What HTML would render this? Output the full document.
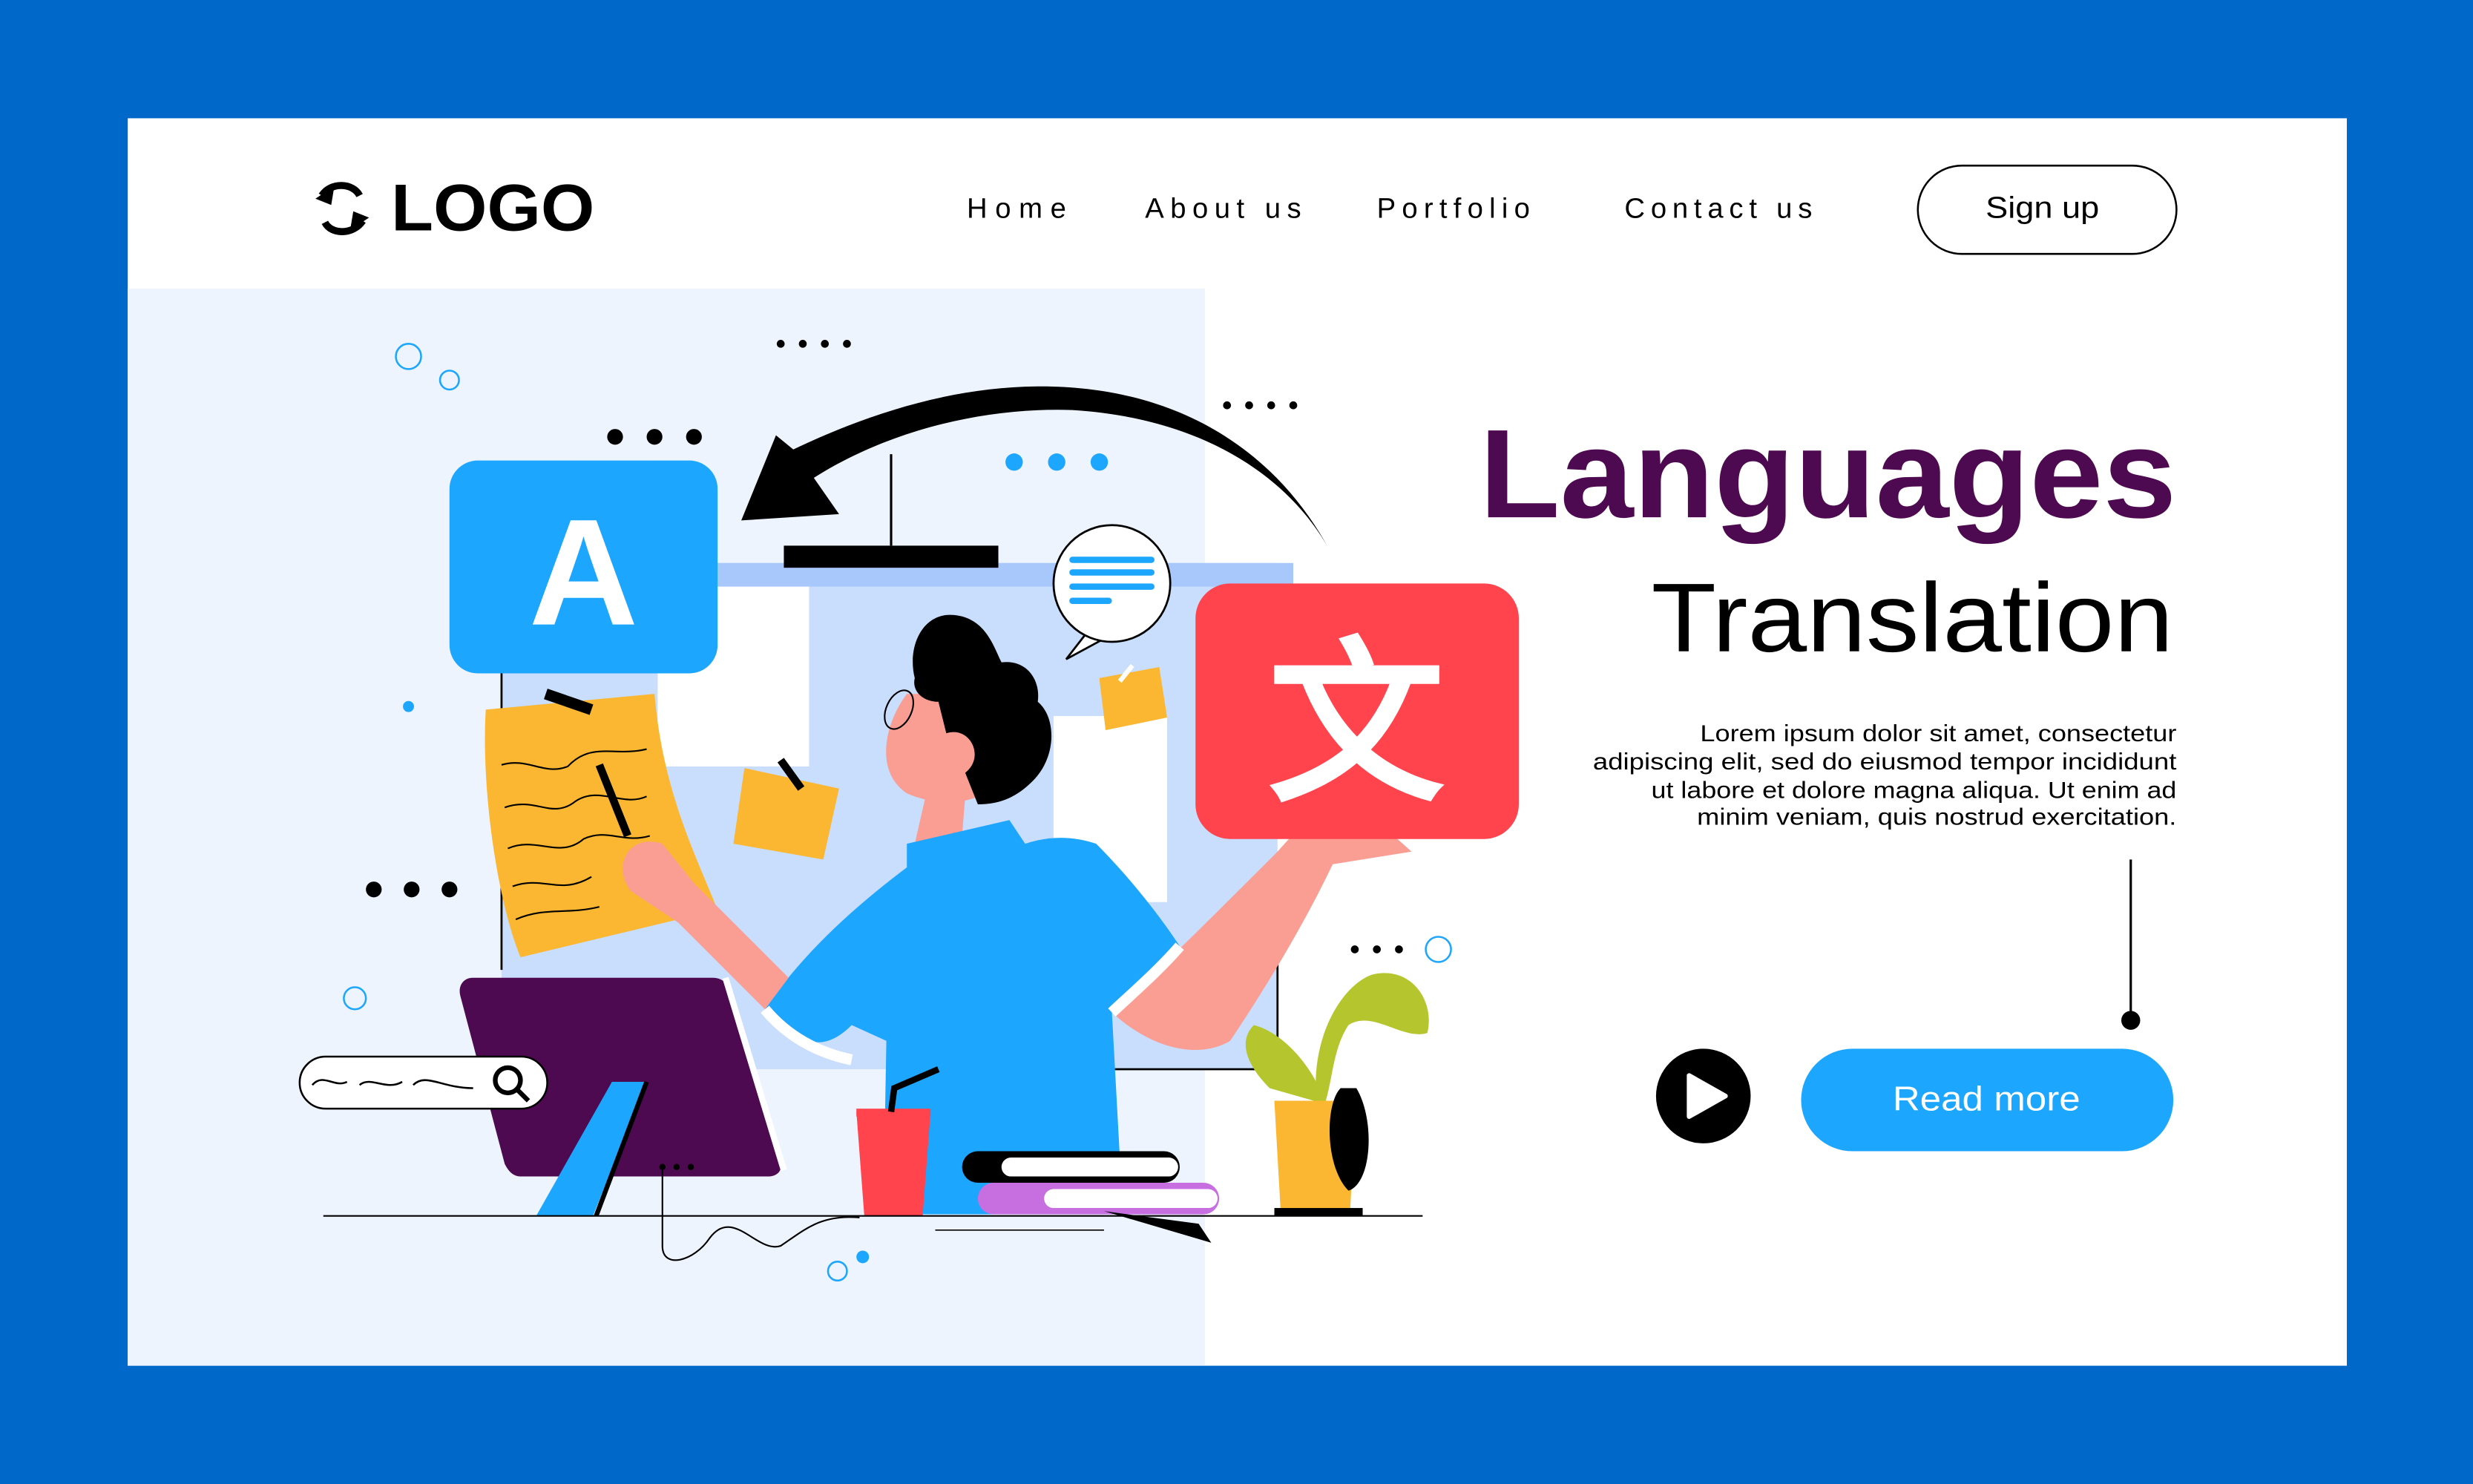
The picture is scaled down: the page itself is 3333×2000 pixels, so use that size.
<!DOCTYPE html>
<html><head><meta charset="utf-8"><style>html,body{margin:0;padding:0;width:3333px;height:2000px;overflow:hidden;background:#0068C9}svg{display:block}text{font-family:"Liberation Sans",sans-serif}</style></head>
<body>
<svg width="3333" height="2000" viewBox="0 0 1568 941" preserveAspectRatio="none" xmlns="http://www.w3.org/2000/svg">
<rect width="1568" height="941" fill="#0068C9"/>
<rect x="81" y="75" width="1407" height="791" fill="#fff"/>
<rect x="81" y="183" width="683" height="683" fill="#EDF4FE"/>
<!-- logo -->
<g fill="none" stroke="#000" stroke-width="4.5">
<path d="M228,124 C224,116 210,115 204,124"/><path d="M206,141 C210,149 224,149 230,140"/></g>
<path d="M200,126 L212,118 L210,130 Z M234,138 L222,146 L224,134 Z" fill="#000"/>
<text x="248" y="146" font-size="42" font-weight="bold" textLength="129" lengthAdjust="spacingAndGlyphs">LOGO</text>
<g font-size="18" fill="#000">
<text x="613" y="138" textLength="63" lengthAdjust="spacing">Home</text><text x="726" y="138" textLength="99" lengthAdjust="spacing">About us</text><text x="873" y="138" textLength="97" lengthAdjust="spacing">Portfolio</text><text x="1030" y="138" textLength="119" lengthAdjust="spacing">Contact us</text></g>
<rect x="1216" y="105" width="164" height="56" rx="28" fill="none" stroke="#000" stroke-width="1.2"/>
<text x="1259" y="138" font-size="19" textLength="72" lengthAdjust="spacingAndGlyphs">Sign up</text>
<text x="938" y="328" font-size="80" font-weight="bold" fill="#4E0A50" textLength="442" lengthAdjust="spacingAndGlyphs">Languages</text>
<text x="1047" y="413" font-size="62" textLength="331" lengthAdjust="spacingAndGlyphs">Translation</text>
<g font-size="14.6">
<text x="1078" y="470" textLength="302" lengthAdjust="spacingAndGlyphs">Lorem ipsum dolor sit amet, consectetur</text>
<text x="1010" y="488" textLength="370" lengthAdjust="spacingAndGlyphs">adipiscing elit, sed do eiusmod tempor incididunt</text>
<text x="1047" y="506" textLength="333" lengthAdjust="spacingAndGlyphs">ut labore et dolore magna aliqua. Ut enim ad</text>
<text x="1076" y="523" textLength="304" lengthAdjust="spacingAndGlyphs">minim veniam, quis nostrud exercitation.</text></g>
<line x1="1351" y1="545" x2="1351" y2="645" stroke="#000" stroke-width="1.5"/>
<circle cx="1351" cy="647" r="6" fill="#000"/>
<circle cx="1080" cy="695" r="30" fill="#000"/>
<path d="M1071,682 L1094,695 L1071,708 Z" fill="#fff" stroke="#fff" stroke-width="3" stroke-linejoin="round"/>
<rect x="1142" y="665" width="236" height="65" rx="32.5" fill="#1DA6FE"/>
<text x="1200" y="704" font-size="22" fill="#fff" textLength="119" lengthAdjust="spacingAndGlyphs">Read more</text>

<!-- illustration -->
<rect x="318" y="357" width="492" height="321" fill="#C9DDFD"/>
<rect x="455" y="357" width="365" height="15" fill="#A8C8FC"/>
<path d="M318,420 V615 M700,678 H810 V570" stroke="#000" fill="none" stroke-width="1.3"/>
<rect x="417" y="372" width="96" height="114" fill="#fff"/>
<rect x="668" y="454" width="72" height="118" fill="#fff"/>
<line x1="565" y1="288" x2="565" y2="346" stroke="#000" stroke-width="1.5"/>
<rect x="497" y="346" width="136" height="14" fill="#000"/>
<path d="M842,347 C805,280 740,245 660,245 C600,245 545,265 503,285 L492,276 L470,330 L532,326 L516,303 C560,275 620,258 680,260 C760,265 815,300 842,347 Z" fill="#000"/>
<!-- A card -->
<rect x="285" y="292" width="170" height="135" rx="18" fill="#1DA6FE"/>
<text x="370" y="396" font-size="96" font-weight="bold" fill="#fff" text-anchor="middle">A</text>
<!-- dots -->
<g fill="#000"><circle cx="390" cy="277" r="5"/><circle cx="415" cy="277" r="5"/><circle cx="440" cy="277" r="5"/>
<circle cx="237" cy="564" r="5"/><circle cx="261" cy="564" r="5"/><circle cx="285" cy="564" r="5"/>
<circle cx="495" cy="218" r="2.5"/><circle cx="509" cy="218" r="2.5"/><circle cx="523" cy="218" r="2.5"/><circle cx="537" cy="218" r="2.5"/>
<circle cx="778" cy="257" r="2.5"/><circle cx="792" cy="257" r="2.5"/><circle cx="806" cy="257" r="2.5"/><circle cx="820" cy="257" r="2.5"/>
<circle cx="859" cy="602" r="2.5"/><circle cx="873" cy="602" r="2.5"/><circle cx="887" cy="602" r="2.5"/></g>
<g fill="#1DA6FE"><circle cx="643" cy="293" r="5.5"/><circle cx="670" cy="293" r="5.5"/><circle cx="697" cy="293" r="5.5"/><circle cx="259" cy="448" r="3.5"/><circle cx="547" cy="797" r="4"/></g>
<g fill="none" stroke="#1DA6FE" stroke-width="1.2"><circle cx="259" cy="226" r="8"/><circle cx="285" cy="241" r="6"/><circle cx="225" cy="633" r="7"/><circle cx="912" cy="602" r="8"/><circle cx="531" cy="806" r="6"/></g>
<!-- yellow paper -->
<path d="M308,450 L415,440 C420,500 440,540 455,577 L330,607 C315,570 305,500 308,450 Z" fill="#FBB731"/>
<path d="M346,440 L375,450" stroke="#000" stroke-width="7"/>
<g fill="none" stroke="#000" stroke-width="1"><path d="M318,485 C335,480 345,492 360,486 C375,470 390,480 410,475"/><path d="M320,512 C340,505 350,520 365,508 C380,498 395,512 410,505"/><path d="M322,538 C340,530 355,545 370,532 C385,525 395,535 412,530"/><path d="M325,562 C345,555 355,568 375,556"/><path d="M327,583 C345,575 360,580 380,575"/></g>
<path d="M380,485 L398,530" stroke="#000" stroke-width="5"/>
<!-- sticky notes -->
<path d="M472,487 L532,500 L522,545 L465,535 Z" fill="#FBB731"/><path d="M495,482 L508,500" stroke="#000" stroke-width="5"/>
<path d="M697,430 L735,423 L740,455 L701,463 Z" fill="#FBB731"/><path d="M710,432 L718,422" stroke="#fff" stroke-width="3"/>
<!-- speech bubble -->
<path d="M690,400 L676,418 L700,405" fill="#fff" stroke="#000" stroke-width="1.3"/>
<circle cx="705" cy="370" r="37" fill="#fff" stroke="#000" stroke-width="1.3"/>
<g stroke="#1DA6FE" stroke-width="4" stroke-linecap="round"><line x1="680" y1="355" x2="730" y2="355"/><line x1="680" y1="363" x2="730" y2="363"/><line x1="680" y1="372" x2="730" y2="372"/><line x1="680" y1="381" x2="703" y2="381"/></g>
<!-- person -->
<path d="M588,500 L580,535 L610,530 L612,505 Z" fill="#FA9E94"/>
<path d="M575,440 C560,460 555,490 575,503 C590,510 610,510 620,505 L620,440 Z" fill="#FA9E94"/>
<path d="M580,430 C575,410 585,388 605,390 C625,392 630,410 635,420 C650,418 660,430 658,445 C670,455 670,480 655,495 C645,505 635,510 620,510 L612,490 C625,480 615,460 600,465 L595,445 C585,445 578,438 580,430 Z" fill="#000"/>
<ellipse cx="570" cy="450" rx="8" ry="13" fill="none" stroke="#000" stroke-width="1" transform="rotate(25 570 450)"/>
<path d="M575,535 L640,520 L650,535 C665,530 680,530 695,535 C715,555 735,580 748,600 L705,642 L712,770 L560,770 L562,660 L540,650 C520,670 505,660 485,640 C505,610 535,580 575,550 Z" fill="#1DA6FE"/>
<path d="M485,640 L430,585 L400,565 C388,550 398,528 420,535 L440,560 L500,620 Z" fill="#FA9E94"/>
<path d="M705,642 C730,620 770,580 810,540 L828,520 L858,507 L895,540 L845,548 C825,590 800,630 780,660 C760,672 730,665 705,642 Z" fill="#FA9E94"/>
<path d="M485,640 C500,658 520,668 540,672" stroke="#fff" stroke-width="7" fill="none"/>
<path d="M705,642 C720,628 735,615 748,600" stroke="#fff" stroke-width="7" fill="none"/>
<!-- red card -->
<rect x="758" y="370" width="205" height="162" rx="22" fill="#FF444E"/>
<text x="860" y="498" font-size="112" font-weight="bold" fill="#fff" text-anchor="middle" font-family="'Noto Sans CJK SC',sans-serif">文</text>
<!-- monitor -->
<path d="M300,620 L452,620 C458,620 462,624 464,630 L495,738 C496,743 492,746 487,746 L330,746 C325,746 322,742 320,738 L292,632 C290,625 294,620 300,620 Z" fill="#4E0A50"/>
<path d="M460,620 L497,742" stroke="#fff" stroke-width="4"/>
<path d="M340,771 L388,686 L410,686 L376,771 Z" fill="#1DA6FE"/>
<path d="M410,686 L378,771" stroke="#000" stroke-width="3"/>
<g fill="#000"><circle cx="420" cy="740" r="2"/><circle cx="429" cy="740" r="2"/><circle cx="438" cy="740" r="2"/></g>
<path d="M420,742 V790 C420,805 440,800 450,785 C465,765 480,795 495,790 C510,780 520,770 545,772" fill="none" stroke="#000" stroke-width="1"/>
<rect x="190" y="670" width="157" height="33" rx="16.5" fill="#fff" stroke="#000" stroke-width="1.2"/>
<path d="M198,688 C205,680 212,690 220,686 M228,688 C235,682 245,692 255,686 M262,688 C270,680 280,690 300,690" fill="none" stroke="#000" stroke-width="1.2"/>
<circle cx="322" cy="685" r="8" fill="none" stroke="#000" stroke-width="3"/><path d="M328,691 L335,698" stroke="#000" stroke-width="3"/>
<!-- cup -->
<path d="M543,705 L590,705 L585,771 L548,771 Z" fill="#FF444E"/><rect x="543" y="703" width="47" height="5" fill="#FF444E"/>
<path d="M565,705 L567,690 L595,678" stroke="#000" stroke-width="4" fill="none"/>
<!-- books -->
<rect x="610" y="730" width="138" height="20" rx="10" fill="#000"/><rect x="635" y="734" width="112" height="12" rx="6" fill="#fff"/>
<rect x="620" y="750" width="153" height="20" rx="10" fill="#C76EE0"/><rect x="662" y="754" width="110" height="12" rx="6" fill="#fff"/>
<path d="M700,768 L760,776 L768,788 Z" fill="#000"/>
<!-- plant -->
<path d="M835,700 C830,660 850,625 870,618 C895,612 910,635 905,655 C890,660 870,640 855,650 C845,665 845,685 840,700 Z" fill="#B5C52D"/>
<path d="M840,700 C835,680 815,655 795,650 C785,660 790,675 805,690 Z" fill="#B5C52D"/>
<path d="M808,698 L860,698 L856,768 L812,768 Z" fill="#FBB731"/>
<path d="M850,690 C840,700 840,740 855,755 C870,750 872,710 860,690 Z" fill="#000"/>
<rect x="808" y="766" width="56" height="5" fill="#000"/>
<line x1="205" y1="771" x2="902" y2="771" stroke="#000" stroke-width="1"/>
<line x1="593" y1="780" x2="700" y2="780" stroke="#000" stroke-width="0.8"/>
</svg>
</body></html>
